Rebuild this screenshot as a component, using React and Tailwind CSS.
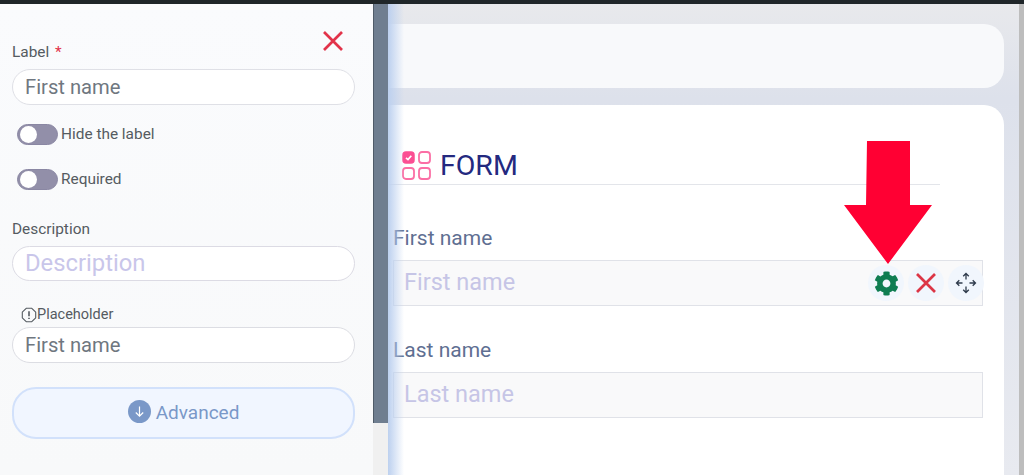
import { FaCog } from "react-icons/fa";

function Toggle({ label }) {
  return (
    <div className="flex items-center ml-[5px]">
      <span className="flex items-center w-[41px] h-[21px] rounded-full bg-[#928fa9] pl-[2px] border border-[#8a87a3]">
        <span className="w-[17px] h-[17px] rounded-full bg-white"></span>
      </span>
      <span className="ml-[3px] text-[15.4px] leading-[21px] text-[#555b61]">{label}</span>
    </div>
  );
}

function CrossIcon({ color }) {
  return (
    <svg width="20" height="20" viewBox="0 0 20 20" fill="none" stroke={color} strokeWidth="2.7" aria-hidden="true">
      <path d="M1 1l18 18M19 1 1 19" />
    </svg>
  );
}

function FormIcon() {
  return (
    <svg width="30" height="30" viewBox="0 0 30 30" fill="none" aria-hidden="true">
      <rect x="1" y="1" width="11" height="11" rx="3" fill="#fb4f93" stroke="#fb4f93" strokeWidth="1.5" />
      <polyline points="4,6.8 6,8.6 9.3,4.8" stroke="#fff" strokeWidth="1.7" />
      <rect x="17" y="1" width="11" height="11" rx="3" stroke="#fb6fa5" strokeWidth="1.8" />
      <rect x="1" y="17" width="11" height="11" rx="3" stroke="#fb6fa5" strokeWidth="1.8" />
      <rect x="17" y="17" width="11" height="11" rx="3" stroke="#fb6fa5" strokeWidth="1.8" />
    </svg>
  );
}

function MoveIcon() {
  return (
    <svg width="24" height="24" viewBox="0 0 24 24" fill="none" stroke="#2f3b4c" strokeWidth="1.3" aria-hidden="true">
      <path d="M12 2.5v6M9.2 5.3 12 2.5l2.8 2.8" />
      <path d="M12 15.5v6M9.2 18.7 12 21.5l2.8-2.8" />
      <path d="M2.5 12h6M5.3 9.2 2.5 12l2.8 2.8" />
      <path d="M15.5 12h6M18.7 9.2l2.8 2.8-2.8 2.8" />
    </svg>
  );
}

function InfoIcon() {
  return (
    <svg width="16" height="16" viewBox="0 0 16 16" fill="none" stroke="#555b61" strokeWidth="1.1" aria-hidden="true">
      <path d="M5.2 1.3h5.6l3.9 3.9v5.6l-3.9 3.9H5.2l-3.9-3.9V5.2z" strokeLinejoin="round" />
      <path d="M8 4.2v5M8 10.8v1.2" strokeWidth="1.6" />
    </svg>
  );
}

function RedArrow() {
  return (
    <svg className="absolute left-[843px] top-[141px]" width="90" height="124" viewBox="0 0 90 124" aria-hidden="true">
      <polygon points="24,0 67,0 67,64 89,64 45,123 1,64 23,64" fill="#ff0033" />
    </svg>
  );
}

function Field({ label, placeholder, children }) {
  return (
    <div className="flex flex-col">
      <div className="h-[22px] text-[21px] leading-[22px] text-[#5f6f92]">{label}</div>
      <div className="mt-[11px] flex items-center h-[46px] w-[590px] border border-[#e0e2e8] bg-[#f9f9fa] pl-[10px]">
        <span className="flex-1 text-[23.5px] text-[#c6c5e6]">{placeholder}</span>
        {children}
      </div>
    </div>
  );
}

function RoundIcon({ children }) {
  return (
    <span className="flex items-center justify-center w-[36px] h-[36px] rounded-full bg-[#f1f6fd]">{children}</span>
  );
}

export default function App() {
  return (
    <div className="relative flex flex-col w-[1024px] h-[475px] overflow-hidden bg-[#e7e9ef] font-['Roboto',sans-serif]">
      <div className="h-[4px] bg-[#1f2629]"></div>
      <div className="flex flex-1">
        <aside className="w-[373px] bg-gradient-to-b from-[#fafbfd] to-[#f8f9fa] pt-[27px] pl-[12px] pr-[18px]">
          <div className="flex justify-end pr-[12px] h-[12px]">
            <CrossIcon color="#e2334a" />
          </div>
          <div className="mt-[1px] text-[15.4px] leading-[17px] text-[#555b61]">
            Label <span className="ml-[2px] text-[#e2334a]">*</span>
          </div>
          <div className="mt-[8px] flex items-center h-[36px] rounded-full border border-[#dfe0e6] bg-white pl-[12px] text-[20.2px] text-[#6f7780]">
            First name
          </div>
          <div className="mt-[19px]">
            <Toggle label="Hide the label" />
          </div>
          <div className="mt-[24px]">
            <Toggle label="Required" />
          </div>
          <div className="mt-[31px] text-[15.4px] leading-[17px] text-[#555b61]">Description</div>
          <div className="mt-[8px] flex items-center h-[35px] rounded-full border border-[#dcdbe4] bg-white pl-[12px] text-[23.8px] text-[#c9c6ea]">
            Description
          </div>
          <div className="mt-[25px] flex items-center h-[18px] pl-[9px] text-[14.5px] text-[#555b61]">
            <InfoIcon />
            Placeholder
          </div>
          <div className="mt-[3px] flex items-center h-[36px] rounded-full border border-[#dcdde3] bg-white pl-[12px] text-[20.2px] text-[#6f7780]">
            First name
          </div>
          <div className="mt-[24px] flex items-center justify-center gap-[5px] h-[52px] rounded-[24px] border-2 border-[#d2e1fb] bg-[#f1f6ff] text-[19px] text-[#7a98c8]">
            <svg width="23" height="23" viewBox="0 0 23 23" fill="none" className="-mt-[3px]" aria-hidden="true">
              <circle cx="11.5" cy="11.5" r="11.5" fill="#7a98c8" />
              <path d="M11.5 6.5v9.5M7.8 12.5l3.7 3.7 3.7-3.7" stroke="#fff" strokeWidth="1.2" />
            </svg>
            Advanced
          </div>
        </aside>

        <div className="flex flex-col w-[15px] bg-[#f0f0f0]">
          <div className="h-[419px] bg-[#6f7e90] border-l border-[#4f5b68]"></div>
        </div>

        <main className="relative flex-1 flex flex-col pt-[20px] pr-[15px] bg-gradient-to-b from-[#e8e9ec] via-[#dde1eb] via-20% to-[#e8eaf0]">
          <div className="absolute left-0 top-0 bottom-0 w-[16px] bg-gradient-to-r from-[#bcd0ef] to-transparent"></div>
          <div className="h-[64px] rounded-r-[20px] bg-[#f8f9fb]"></div>
          <div className="mt-[17px] flex-1 rounded-tr-[20px] bg-white pt-[43px] pl-[5px]">
            <div className="flex items-center h-[37px] w-[552px] border-b border-[#e3e5ea] -ml-[5px] pl-[14px]">
              <FormIcon />
              <span className="ml-[8px] text-[28.5px] leading-[34px] text-[#24297f]">FORM</span>
            </div>
            <div className="mt-[42px]">
              <Field label="First name" placeholder="First name">
                <div className="flex gap-[4px] -mr-[2px]">
                  <RoundIcon>
                    <FaCog size={25} className="text-[#0f7d52]" />
                  </RoundIcon>
                  <RoundIcon>
                    <CrossIcon color="#dc3545" />
                  </RoundIcon>
                  <RoundIcon>
                    <MoveIcon />
                  </RoundIcon>
                </div>
              </Field>
            </div>
            <div className="mt-[33px]">
              <Field label="Last name" placeholder="Last name" />
            </div>
          </div>
        </main>

        <div className="w-[5px] bg-[#bdbdbd]"></div>
      </div>
      <RedArrow />
    </div>
  );
}
